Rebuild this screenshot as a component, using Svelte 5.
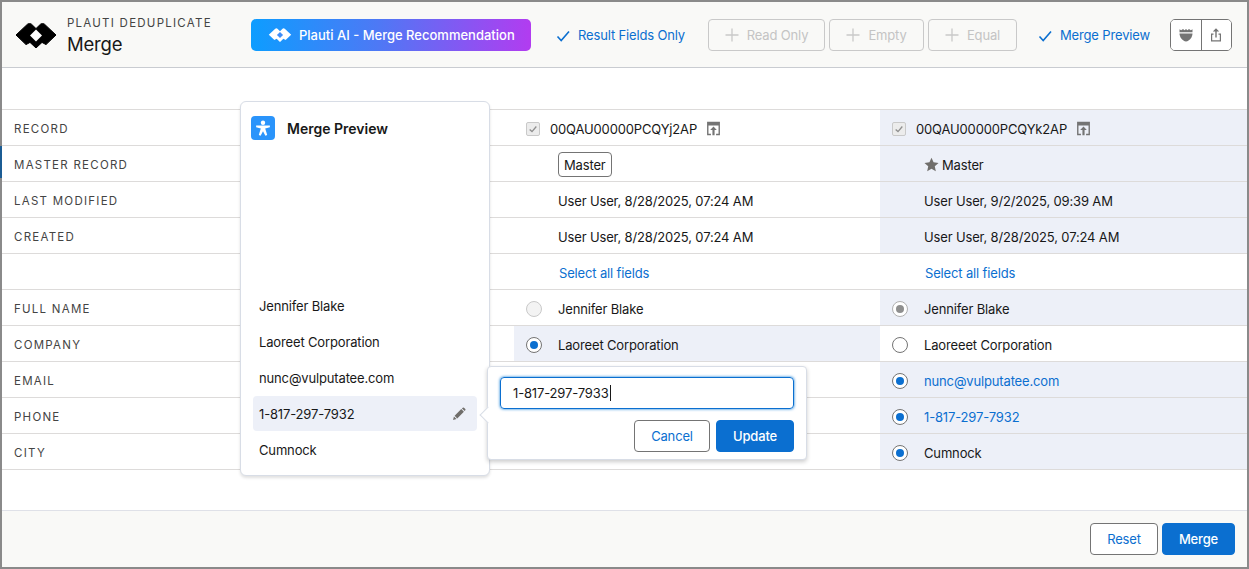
<script>
  const rows = [
    { label: 'RECORD', kind: 'record', a: '00QAU00000PCQYj2AP', b: '00QAU00000PCQYk2AP', bHi: true },
    { label: 'MASTER RECORD', kind: 'master', bHi: true },
    { label: 'LAST MODIFIED', a: 'User User, 8/28/2025, 07:24 AM', b: 'User User, 9/2/2025, 09:39 AM', bHi: true },
    { label: 'CREATED', a: 'User User, 8/28/2025, 07:24 AM', b: 'User User, 8/28/2025, 07:24 AM', bHi: true },
    { label: '', kind: 'select' },
    { label: 'FULL NAME', kind: 'radio', a: 'Jennifer Blake', b: 'Jennifer Blake', aR: 'off', bR: 'gray', bHi: true },
    { label: 'COMPANY', kind: 'radio', a: 'Laoreet Corporation', b: 'Laoreeet Corporation', aR: 'on', bR: 'empty', aHi: true },
    { label: 'EMAIL', kind: 'radio', a: '', b: 'nunc@vulputatee.com', bR: 'on', bHi: true, link: true },
    { label: 'PHONE', kind: 'radio', a: '', b: '1-817-297-7932', bR: 'on', bHi: true, link: true },
    { label: 'CITY', kind: 'radio', a: '', b: 'Cumnock', bR: 'on', bHi: true }
  ];
  const preview = ['Jennifer Blake', 'Laoreet Corporation', 'nunc@vulputatee.com', '1-817-297-7932', 'Cumnock'];
  const logo = 'M1 12 L12.5 1.2 Q14.5 -.4 16.5 1.2 L21 5.6 L25.5 1.2 Q27.5 -.4 29.5 1.2 L41 12 L31 21.6 L27 19.4 L21 25 L15 19.4 L11 21.6 Z';
</script>

{#snippet check()}
  <svg class="chk" viewBox="0 0 16 16" width="16" height="16"><path d="M2.5 8.5 L6.2 12.5 L14 3.5" fill="none" stroke="#0b6fd0" stroke-width="1.6"/></svg>
{/snippet}
{#snippet plus()}
  <svg viewBox="0 0 14 14" width="14" height="14"><path d="M7 0.5V13.5M0.5 7H13.5" stroke="#c9c9c9" stroke-width="1.3"/></svg>
{/snippet}
{#snippet openIcon()}
  <svg class="open" viewBox="0 0 14 14" width="15" height="15"><path d="M1 .8h12v12.4h-3.6v-1.4h2.3V4.2H2.3v7.6h2.3v1.4H1z" fill="#747474"/><path d="M7 5.2l3.1 3.2H8v4.8H6V8.4H3.9z" fill="#747474"/></svg>
{/snippet}
{#snippet cb()}
  <span class="cb"><svg viewBox="0 0 12 12" width="10" height="10"><path d="M2 6.5l2.8 2.6L10 3" fill="none" stroke="#8f8f8f" stroke-width="1.6"/></svg></span>
{/snippet}
{#snippet radio(state)}
  <span class="radio {state}"></span>
{/snippet}

<div class="frame">
  <span class="sliver"></span>
  <header class="head">
    <svg class="logo" viewBox="0 0 42 25" width="42" height="25"><path d={logo} fill="#000" stroke="#000" stroke-linejoin="round"/><path d="M21 6.5L27 12.5L21 18.5L15 12.5Z" fill="#fff"/></svg>
    <div class="titles">
      <div class="eyebrow">PLAUTI DEDUPLICATE</div>
      <div class="title">Merge</div>
    </div>
    <button class="ai">
      <svg viewBox="0 0 42 25" width="24" height="14"><path d={logo} fill="#fff"/><path d="M21 7L26.5 12.5L21 18L15.5 12.5Z" fill="#3f8df8"/></svg>
      Plauti AI - Merge Recommendation
    </button>
    <div class="toggle first">{@render check()}<span>Result Fields Only</span></div>
    <div class="dis-group">
      <button class="dis w117">{@render plus()}Read Only</button>
      <button class="dis w95">{@render plus()}Empty</button>
      <button class="dis w89">{@render plus()}Equal</button>
    </div>
    <div class="toggle second">{@render check()}<span>Merge Preview</span></div>
    <div class="group">
      <button aria-label="Shield"><svg viewBox="0 0 16 16" width="16" height="16"><path d="M1.5 2.2 L3.2 3.2 L5 2 L6.6 3.2 L8 2 L9.4 3.2 L11 2 L12.8 3.2 L14.5 2.2 V5.2 H1.5Z" fill="#747474"/><path d="M1.5 6.4H14.5C14.4 10.5 11.5 13.6 8 14.6C4.5 13.6 1.6 10.5 1.5 6.4Z" fill="#747474"/></svg></button>
      <button aria-label="Share"><svg viewBox="0 0 16 16" width="16" height="16"><path d="M8 1.2L11.2 4.6H8.7V10.6H7.3V4.6H4.8Z" fill="#747474"/><path d="M5.5 6.5H3V14.5H13V6.5H10.5V7.7H11.8V13.3H4.2V7.7H5.5Z" fill="#747474"/></svg></button>
    </div>
  </header>

  <main class="body">
    <div class="table">
      {#each rows as r}
        <div class="row">
          <div class="lab">{r.label}</div>
          <div class="cell" class:hi={r.aHi}>
            {#if r.kind === 'record'}
              <div class="rec">{@render cb()}<span>{r.a}</span>{@render openIcon()}</div>
            {:else if r.kind === 'master'}
              <span class="masterbtn">Master</span>
            {:else if r.kind === 'select'}
              <a class="link sel">Select all fields</a>
            {:else if r.kind === 'radio'}
              {#if r.aR}<div class="rad">{@render radio(r.aR)}<span>{r.a}</span></div>{/if}
            {:else}
              <span class="txt">{r.a}</span>
            {/if}
          </div>
          <div class="cell" class:hi={r.bHi}>
            {#if r.kind === 'record'}
              <div class="rec">{@render cb()}<span>{r.b}</span>{@render openIcon()}</div>
            {:else if r.kind === 'master'}
              <div class="star"><svg viewBox="0 0 16 16" width="15" height="15"><path d="M8 .8l2.2 4.9 5.3.6-4 3.6 1.1 5.3L8 12.5l-4.6 2.7 1.1-5.3-4-3.6 5.3-.6z" fill="#706e6b"/></svg><span>Master</span></div>
            {:else if r.kind === 'select'}
              <a class="link sel">Select all fields</a>
            {:else if r.kind === 'radio'}
              <div class="rad">{@render radio(r.bR)}<span class:link={r.link}>{r.b}</span></div>
            {:else}
              <span class="txt">{r.b}</span>
            {/if}
          </div>
        </div>
      {/each}
    </div>

    <aside class="pop">
      <div class="pop-head">
        <span class="badge"><svg viewBox="0 0 24 24" width="22" height="22"><circle cx="12" cy="6.2" r="2.4" fill="#fff"/><path d="M4.5 9.4H19.5V11.3L14.4 12.6L16.6 19.6L14.6 20.4L12 15.6L9.4 20.4L7.4 19.6L9.6 12.6L4.5 11.3Z" fill="#fff"/></svg></span>
        <strong>Merge Preview</strong>
      </div>
      <ul class="plist">
        {#each preview as p, i}
          <li class:active={i === 3}>
            <span>{p}</span>
            {#if i === 3}
              <svg viewBox="0 0 16 16" width="14" height="14"><path d="M1.2 14.8L2.2 10.8L5.2 13.8ZM3 10L10.6 2.4L13.6 5.4L6 13ZM11.4 1.6L12.3 .8Q13 .2 13.7 .8L15.2 2.3Q15.8 3 15.2 3.7L14.4 4.6Z" fill="#706e6b"/></svg>
            {/if}
          </li>
        {/each}
      </ul>
    </aside>

    <div class="edit">
      <div class="input"><span>1-817-297-7933</span><i class="caret"></i></div>
      <div class="actions">
        <button class="btn">Cancel</button>
        <button class="btn brand">Update</button>
      </div>
    </div>
  </main>

  <footer class="foot">
    <button class="btn reset">Reset</button>
    <button class="btn brand mergebtn">Merge</button>
  </footer>
</div>

<style>
  :global(body) { margin: 0; background: #fff; }
  .frame {
    box-sizing: border-box; width: 1249px; height: 569px; display: flex; flex-direction: column; position: relative;
    border: 2px solid #8a8a8a; background: #fff;
    font-family: Inter, "Liberation Sans", sans-serif; font-size: 13px; letter-spacing: -.15px; color: #181818;
  }
  .sliver { position: absolute; left: -2px; top: 144px; width: 2px; height: 32px; background: #1b5c94; }
  button { font-family: inherit; letter-spacing: inherit; cursor: pointer; }
  .head {
    height: 66px; flex: none; box-sizing: border-box; display: flex; align-items: center;
    background: #f9f9f7; border-bottom: 1px solid #c9ccd1; padding: 1px 0 0 13px;
  }
  .logo { flex: none; }
  .titles { margin-left: 10px; width: 184px; }
  .eyebrow { font-size: 11.5px; letter-spacing: 1.25px; color: #444; line-height: 14px; margin-top: 1px; }
  .title { font-size: 18.5px; line-height: 24px; margin-top: 2px; letter-spacing: -.2px; }
  .ai {
    width: 280px; height: 32px; border: 0; border-radius: 5px; color: #fff; font-weight: 500; font-size: 13px; letter-spacing: 0;
    background: linear-gradient(90deg, #0d9dff 0%, #4d79f5 45%, #b23cf0 100%);
    display: flex; align-items: center; gap: 7px; padding: 0 0 0 17px; white-space: nowrap;
  }
  .toggle { display: flex; align-items: center; gap: 7px; color: #0b6fd0; white-space: nowrap; }
  .toggle .chk { flex: none; margin-top: 2px; }
  .first { margin-left: 24px; width: 153px; }
  .dis-group { display: flex; gap: 4px; }
  .dis {
    height: 32px; box-sizing: border-box; border: 1px solid #c9c9c9; border-radius: 4px; background: transparent;
    color: #c4c4c4; display: flex; align-items: center; justify-content: center; gap: 8px; font-size: 13px; padding: 0;
  }
  .w117 { width: 117px; } .w95 { width: 95px; } .w89 { width: 89px; }
  .second { margin-left: 20px; width: 133px; }
  .group { display: flex; width: 62px; height: 32px; box-sizing: border-box; border: 1px solid #747474; border-radius: 5px; overflow: hidden; }
  .group button { flex: 1; border: 0; background: #fff; padding: 0; display: flex; align-items: center; justify-content: center; }
  .group button:first-child { border-right: 1px solid #747474; }

  .body { flex: 1; position: relative; padding-top: 41px; background: #fff; }
  .table { border-top: 1px solid #dddbda; }
  .row { height: 36px; box-sizing: border-box; display: grid; grid-template-columns: 512px 366px 1fr; border-bottom: 1px solid #dddbda; }
  .lab { padding: 2px 0 0 12px; font-size: 11.5px; letter-spacing: 1.25px; color: #444; display: flex; align-items: center; }
  .cell { display: flex; align-items: center; padding: 2px 0 0 44px; }
  .cell.hi { background: #edf0f8; }
  .rec { display: flex; align-items: center; margin-left: -32px; }
  .rec span:not(.cb) { margin-left: 10px; }
  .rec .open { margin-left: 9px; }
  .cb { width: 14px; height: 14px; box-sizing: border-box; border: 1px solid #c9c9c9; border-radius: 2px; background: #ececec; display: flex; align-items: center; justify-content: center; }
  .masterbtn { box-sizing: border-box; height: 25px; padding: 0 5px; border: 1px solid #747474; border-radius: 4px; display: flex; align-items: center; background: #fff; }
  .star { display: flex; align-items: center; gap: 3px; }
  .link { color: #0b6fd0; }
  .sel { margin-left: 1px; }
  .rad { display: flex; align-items: center; gap: 16px; margin-left: -32px; }
  .radio { width: 16px; height: 16px; box-sizing: border-box; border-radius: 50%; border: 1px solid #747474; background: #fff; display: flex; align-items: center; justify-content: center; flex: none; }
  .radio.off { border-color: #c9c9c9; background: #f3f3f3; }
  .radio.on::after, .radio.gray::after { content: ''; width: 8px; height: 8px; border-radius: 50%; background: #0b6fd0; }
  .radio.gray { border-color: #b0b0b0; }
  .radio.gray::after { background: #8f8f8f; }

  .pop {
    position: absolute; left: 238px; top: 33px; width: 250px; height: 375px; box-sizing: border-box;
    background: #fff; border: 1px solid #d8dde6; border-radius: 6px; box-shadow: 0 2px 3px rgba(0,0,0,.12);
  }
  .pop-head { display: flex; align-items: center; gap: 12px; padding: 14px 0 0 10px; }
  .badge { width: 24px; height: 24px; border-radius: 4px; background: #2a94fb; display: flex; align-items: center; justify-content: center; }
  .pop-head strong { font-size: 14px; font-weight: 600; color: #181818; letter-spacing: 0; }
  .plist { list-style: none; margin: 0; padding: 0 12px; position: absolute; left: 0; right: 0; top: 186px; }
  .plist li { height: 36px; display: flex; align-items: center; justify-content: space-between; padding: 0 11px 0 6px; box-sizing: border-box; }
  .plist li.active { background: #edf0f8; border-radius: 4px; height: 35px; margin-bottom: 1px; }

  .edit {
    position: absolute; left: 485px; top: 298px; width: 320px; height: 94px; box-sizing: border-box; padding: 10px 12px;
    background: #fff; border: 1px solid #d8dde6; border-radius: 4px; box-shadow: 0 2px 4px rgba(0,0,0,.2);
  }
  .edit::before {
    content: ''; position: absolute; left: -6px; top: 42px; width: 11px; height: 11px; background: #fff; transform: rotate(45deg);
    border-left: 1px solid #d8dde6; border-bottom: 1px solid #d8dde6;
  }
  .input { height: 32px; box-sizing: border-box; border: 1px solid #0b6fd0; border-radius: 4px; box-shadow: 0 0 3px #0176d3; display: flex; align-items: center; padding-left: 12px; position: relative; }
  .caret { width: 1px; height: 16px; background: #181818; margin-left: 1px; }
  .actions { display: flex; justify-content: flex-end; gap: 6px; margin-top: 11px; }
  .btn { height: 32px; box-sizing: border-box; border: 1px solid #747474; border-radius: 4px; background: #fff; color: #0b6fd0; font-size: 13px; width: 76px; padding: 0; }
  .btn.brand { background: #0b6fd0; border-color: #0b6fd0; color: #fff; width: 78px; font-weight: 500; }

  .foot { flex: none; height: 57px; box-sizing: border-box; background: #f9f9f7; border-top: 1px solid #dfe1e8; display: flex; align-items: flex-start; justify-content: flex-end; padding: 12px 12px 0 0; gap: 4px; }
  .reset { width: 68px; }
  .btn.mergebtn { width: 73px; }
</style>
